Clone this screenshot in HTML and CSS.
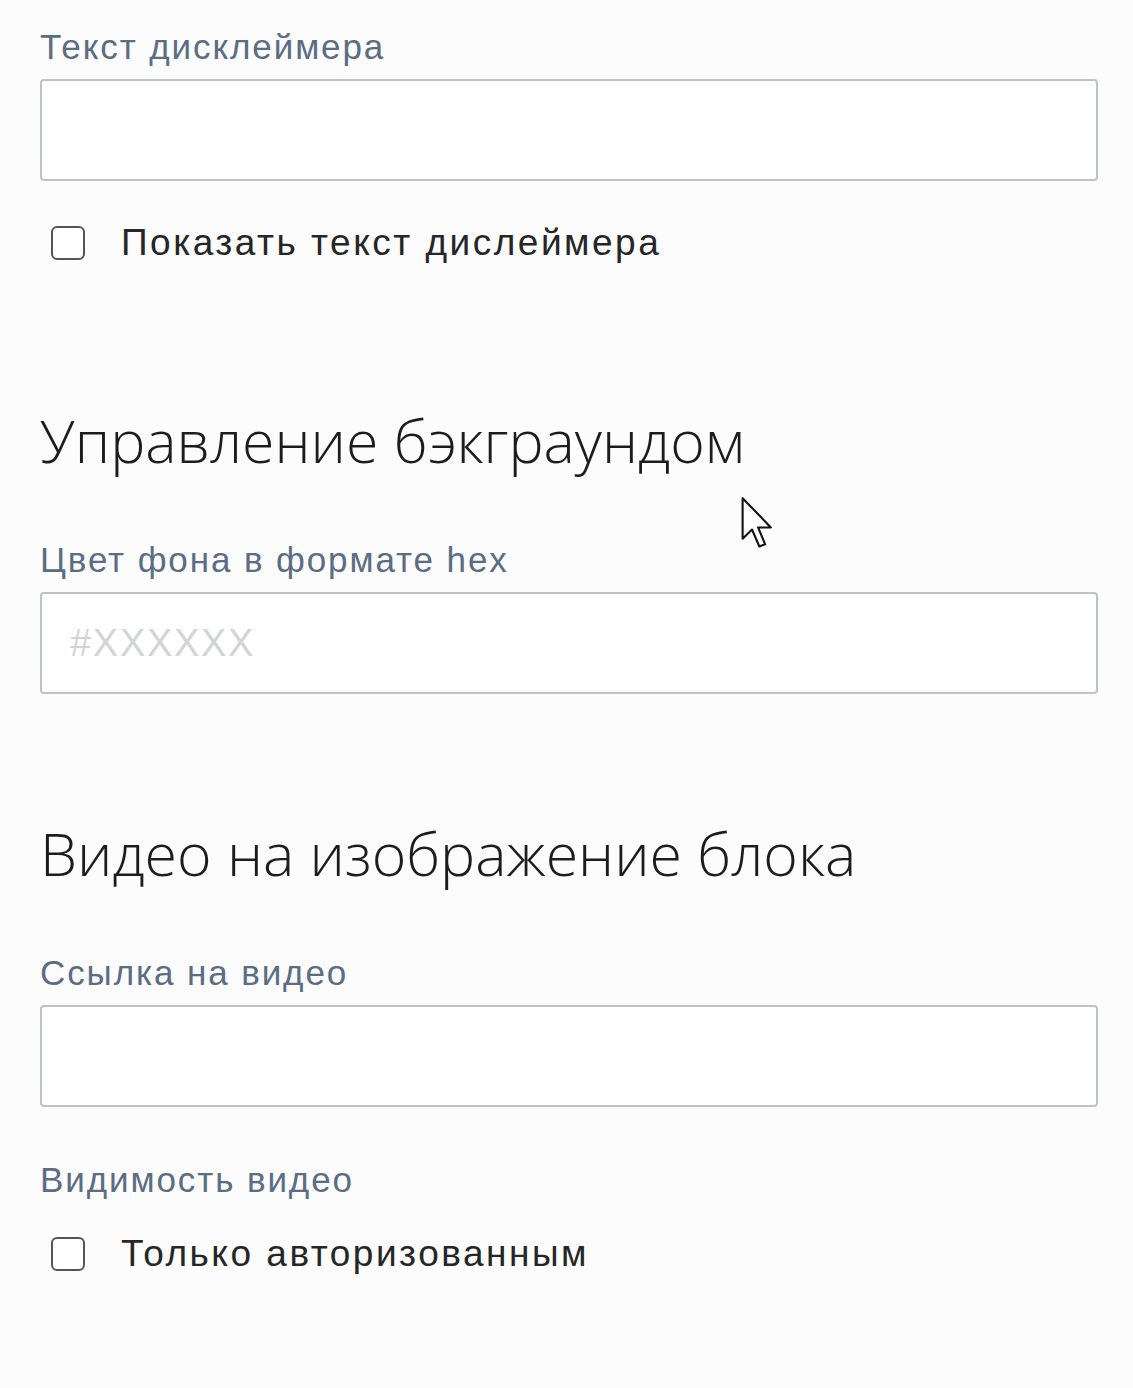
FILE: index.html
```html
<!DOCTYPE html>
<html lang="ru">
<head>
    <meta charset="UTF-8">
    <meta name="viewport" content="width=device-width, initial-scale=1.0">
    <title>Настройки блока</title>
    <link rel="stylesheet" href="styles.css">
</head>
<body>
    <div class="form">
        <label class="field-label" for="disclaimer">Текст дисклеймера</label>
        <input class="field" id="disclaimer" type="text">
        <label class="check check-first">
            <input type="checkbox"><span class="box"></span>
            <span>Показать текст дислеймера</span>
        </label>

        <h2 class="section-title title-bg">Управление бэкграундом</h2>
        <label class="field-label label-after-title" for="bgcolor">Цвет фона в формате hex</label>
        <input class="field" id="bgcolor" type="text" placeholder="#XXXXXX">

        <h2 class="section-title title-video">Видео на изображение блока</h2>
        <label class="field-label label-after-title" for="video">Ссылка на видео</label>
        <input class="field" id="video" type="text">

        <div class="field-label label-visibility">Видимость видео</div>
        <label class="check check-second">
            <input type="checkbox"><span class="box"></span>
            <span>Только авторизованным</span>
        </label>

        <svg class="cursor" width="34" height="56" viewBox="0 0 13 21">
            <path d="M1 1 L1 16.5 L4.6 13 L7.4 19.5 L9.6 18.6 L6.9 12.2 L11.8 12.2 Z" fill="#fff" stroke="#111" stroke-width="0.8" stroke-linejoin="round"/>
        </svg>
    </div>
</body>
</html>
```

FILE: styles.css
```css
body {
    margin: 0;
    background-color: #fcfcfc;
    font-family: "Liberation Sans", Arial, sans-serif;
}
.form {
    position: relative;
    width: 1058px;
    padding: 27px 0 60px 40px;
}
.field-label {
    display: block;
    font-size: 35px;
    line-height: 40px;
    letter-spacing: 1.9px;
    color: #5a6d84;
    margin-bottom: 12px;
}
.field {
    display: block;
    box-sizing: border-box;
    width: 1058px;
    height: 102px;
    margin: 0;
    padding: 0 28px;
    border: 2px solid #bcc2cb;
    border-radius: 4px;
    background-color: #fff;
    font-family: "Liberation Sans", Arial, sans-serif;
    font-size: 38px;
    letter-spacing: 1.7px;
    color: #222;
    outline: none;
}
.field::placeholder {
    color: #d2d4d8;
}
.check {
    display: flex;
    align-items: center;
    height: 40px;
    font-size: 37px;
    letter-spacing: 2.5px;
    color: #262626;
    cursor: pointer;
}
.check input {
    display: none;
}
.check .box {
    box-sizing: border-box;
    width: 34px;
    height: 34px;
    margin: 0 36px 0 11px;
    border: 2px solid #555;
    border-radius: 6px;
    background-color: #fff;
}
.check-first {
    margin-top: 42px;
}
.check-second {
    margin-top: 34px;
}
.section-title {
    font-family: "Open Sans", sans-serif;
    font-weight: 300;
    font-size: 59px;
    line-height: 72px;
    color: #1c1c1c;
    margin: 0;
}
.title-bg {
    margin-top: 141px;
}
.title-video {
    margin-top: 123px;
}
.label-after-title {
    margin-top: 64px;
}
.label-visibility {
    margin-top: 53px;
    margin-bottom: 0;
}
.cursor {
    position: absolute;
    left: 740px;
    top: 495px;
}
```
